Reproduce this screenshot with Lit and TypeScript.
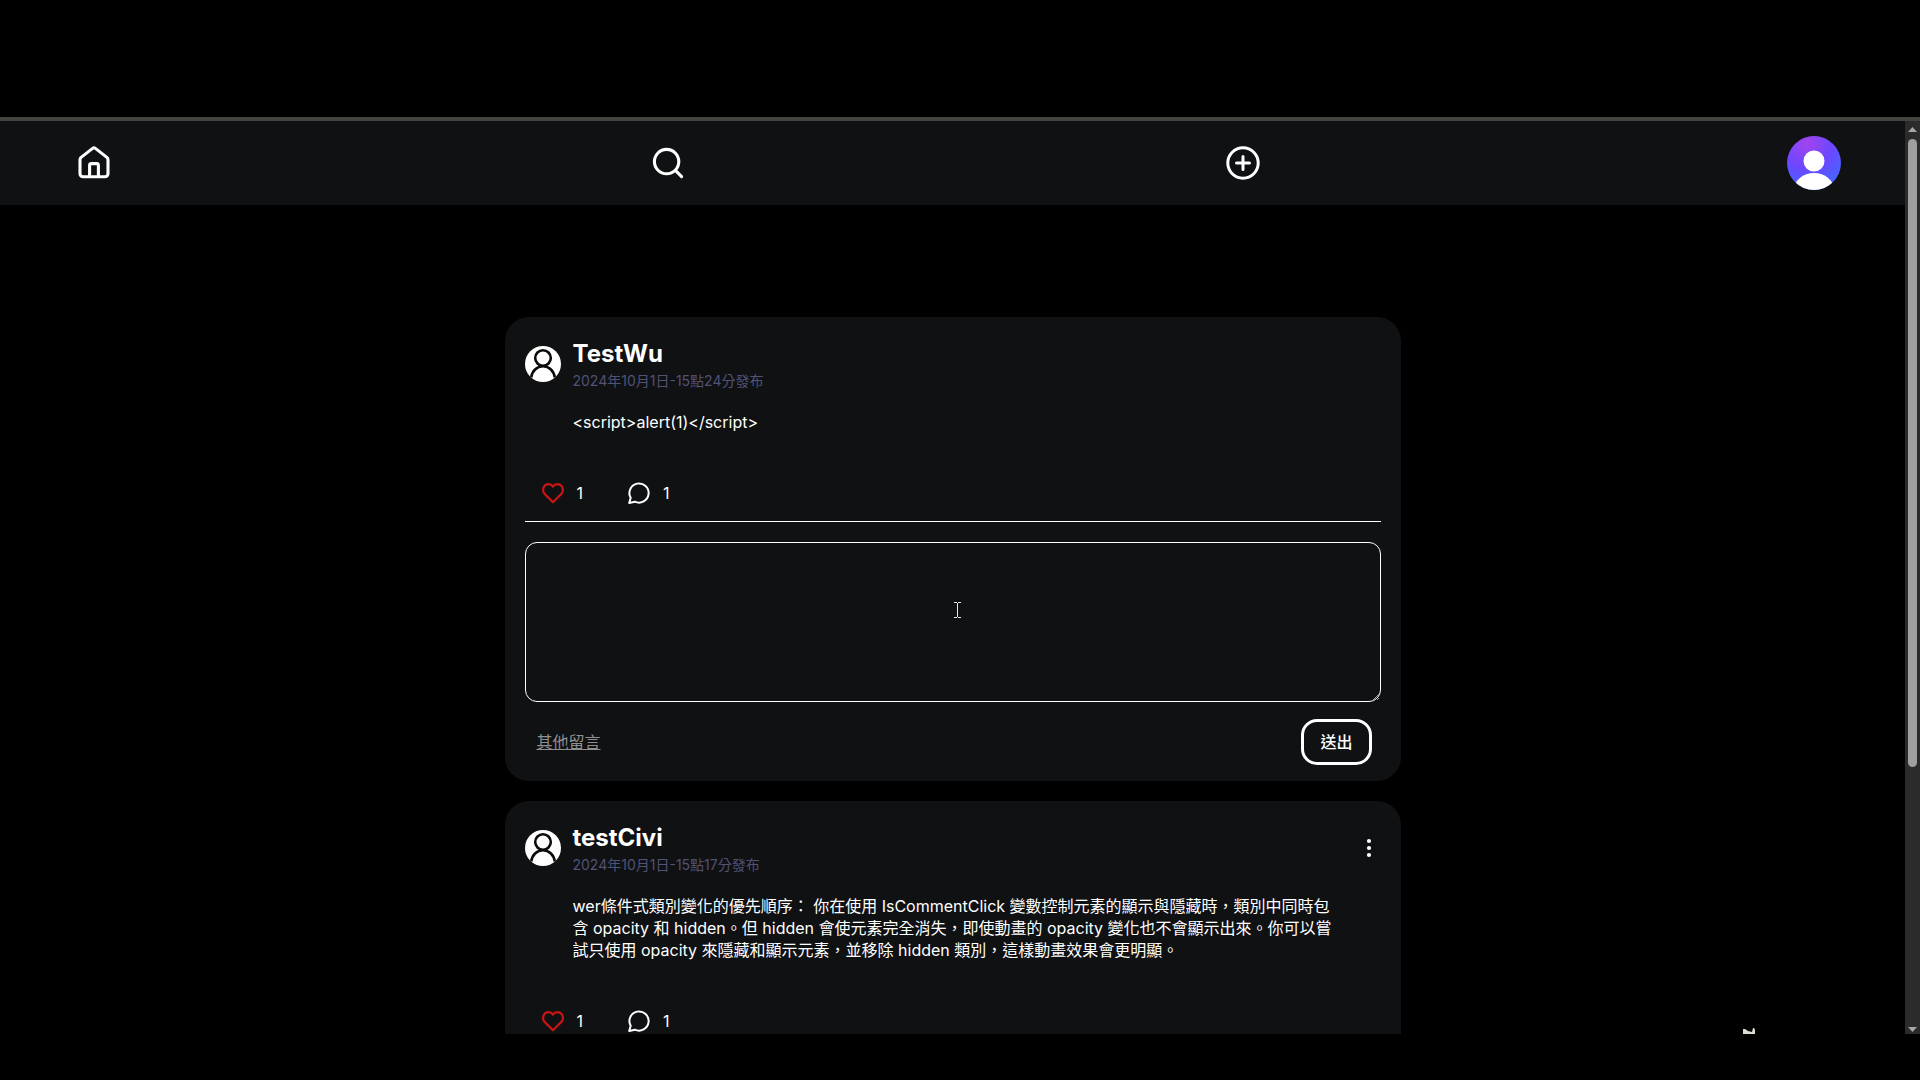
import { LitElement, html, css, svg, nothing } from "lit";
import { customElement, property } from "lit/decorators.js";

interface Post {
  id: number;
  author: string;
  date: string;
  body: string;
  likes: number;
  comments: number;
  replying: boolean;
  owned: boolean;
}

const POSTS: Post[] = [
  {
    id: 1,
    author: "TestWu",
    date: "2024年10月1日-15點24分發布",
    body: "<script>alert(1)</script>",
    likes: 1,
    comments: 1,
    replying: true,
    owned: false,
  },
  {
    id: 2,
    author: "testCivi",
    date: "2024年10月1日-15點17分發布",
    body:
      "wer條件式類別變化的優先順序： 你在使用 IsCommentClick 變數控制元素的顯示與隱藏時，類別中同時包含 opacity 和 hidden。但 hidden 會使元素完全消失，即使動畫的 opacity 變化也不會顯示出來。你可以嘗試只使用 opacity 來隱藏和顯示元素，並移除 hidden 類別，這樣動畫效果會更明顯。",
    likes: 1,
    comments: 1,
    replying: false,
    owned: true,
  },
];

const shared = css`
  * {
    box-sizing: border-box;
  }
  button,
  textarea {
    margin: 0;
    padding: 0;
    border: 0;
    background: none;
    color: inherit;
    font: inherit;
  }
  button {
    cursor: pointer;
  }
  svg {
    display: block;
    fill: none;
  }
`;

@customElement("site-nav")
export class SiteNav extends LitElement {
  static styles = [
    shared,
    css`
      :host {
        display: block;
        background: #0f1113;
      }
      .bar {
        display: flex;
        align-items: center;
        justify-content: space-between;
        height: 84px;
        padding: 0 64px;
      }
      .item {
        display: flex;
        align-items: center;
        justify-content: center;
        width: 60px;
        height: 60px;
        color: #fff;
      }
      .avatar {
        width: 54px;
        height: 54px;
        border-radius: 50%;
        overflow: hidden;
      }
    `,
  ];

  render() {
    return html`
      <nav class="bar">
        <a class="item" href="#home" aria-label="Home">
          <svg width="34" height="34" viewBox="0 0 34 34" stroke="currentColor" stroke-width="3.1" stroke-linejoin="round">
            <path d="M3 13.8c0-1 .4-1.800 1.100-2.400L15.600 2.400a2.200 2.200 0 0 1 2.800 0l11.500 9c.7.6 1.100 1.400 1.100 2.400v14a3 3 0 0 1-3 3H6a3 3 0 0 1-3-3z" />
            <path d="M12.600 30.800V19.400a1.800 1.800 0 0 1 1.800-1.800h5.200a1.800 1.800 0 0 1 1.800 1.800v11.400" />
          </svg>
        </a>
        <a class="item" href="#search" aria-label="Search">
          <svg width="34" height="34" viewBox="0 0 34 34" stroke="currentColor" stroke-width="3.1" stroke-linecap="round">
            <circle cx="15.6" cy="15.6" r="12.2" />
            <path d="m24.4 24.4 6.2 6.2" />
          </svg>
        </a>
        <a class="item" href="#create" aria-label="Create post">
          <svg width="34" height="34" viewBox="0 0 34 34" stroke="currentColor" stroke-width="3" stroke-linecap="round">
            <circle cx="17" cy="17" r="15.2" />
            <path d="M17 10.5v13M10.5 17h13" />
          </svg>
        </a>
        <button class="avatar" aria-label="Account">
          <svg width="54" height="54" viewBox="0 0 54 54">
            <defs>
              <radialGradient id="violet" cx="0.36" cy="0.12" r="0.95">
                <stop offset="0" stop-color="#a444ee" />
                <stop offset="0.5" stop-color="#6c47ff" />
                <stop offset="1" stop-color="#3f6bff" />
              </radialGradient>
            </defs>
            <rect width="54" height="54" fill="url(#violet)" />
            <circle cx="27" cy="25" r="10.5" fill="#fff" />
            <ellipse cx="27" cy="54" rx="20" ry="17" fill="#fff" />
          </svg>
        </button>
      </nav>
    `;
  }
}

@customElement("post-card")
export class PostCard extends LitElement {
  static styles = [
    shared,
    css`
      :host {
        display: block;
      }
      .card {
        padding: 20px 20px 16px;
        border-radius: 24px;
        background: #0f1113;
      }
      .head {
        display: flex;
        align-items: center;
        gap: 12px;
      }
      .who {
        flex: 1;
      }
      .name {
        margin: 0;
        font-size: 24px;
        line-height: 34px;
        font-weight: 700;
      }
      .date {
        display: block;
        font-size: 14px;
        line-height: 20px;
        font-weight: 400;
        color: #525275;
      }
      .more {
        display: flex;
        justify-content: center;
        width: 24px;
        height: 24px;
      }
      .body {
        margin: 20px 48px 0;
        line-height: 22px;
      }
      .actions {
        display: flex;
        gap: 44px;
        margin-top: 48px;
        padding: 0 16px 16px;
      }
      .action {
        display: flex;
        align-items: center;
        gap: 12px;
        height: 24px;
      }
      .like svg {
        color: #c91414;
      }
      .reply {
        border-top: 1px solid #fff;
        padding-top: 20px;
      }
      .text {
        display: block;
        width: 100%;
        height: 160px;
        padding: 12px;
        border: 1px solid #fff;
        border-radius: 12px;
        resize: vertical;
      }
      .foot {
        display: flex;
        align-items: center;
        justify-content: space-between;
        margin-top: 17px;
        padding: 0 9px 0 12px;
      }
      .others {
        color: #8f8f8f;
        text-decoration: underline;
      }
      .send {
        height: 46px;
        padding: 0 16px;
        border: 3px solid #fff;
        border-radius: 16px;
        font-weight: 500;
      }
    `,
  ];

  @property({ attribute: false }) post!: Post;

  private renderReply() {
    return html`
      <form class="reply" @submit=${(e: Event) => e.preventDefault()}>
        <textarea class="text" aria-label="留言"></textarea>
        <div class="foot">
          <a class="others" href="#comments">其他留言</a>
          <button class="send" type="submit">送出</button>
        </div>
      </form>
    `;
  }

  render() {
    const p = this.post;
    return html`
      <article class="card">
        <header class="head">
          <svg width="36" height="36" viewBox="0 0 36 36">
            <defs>
              <clipPath id="disc"><circle cx="18" cy="18" r="18" /></clipPath>
            </defs>
            <g clip-path="url(#disc)">
              <rect width="36" height="36" fill="#fff" />
              <circle cx="18" cy="12" r="7.8" stroke="#0a0b0c" stroke-width="2.6" />
              <path d="M6.2 31.5c.8-6.500 5.600-11.200 11.800-11.200s11 4.700 11.800 11.200" stroke="#0a0b0c" stroke-width="2.6" />
            </g>
          </svg>
          <div class="who">
            <h2 class="name">${p.author}</h2>
            <time class="date">${p.date}</time>
          </div>
          ${p.owned
            ? html`<button class="more" aria-label="更多">
                <svg width="24" height="24" viewBox="0 0 24 24">
                  ${[5, 12, 19].map((y) => svg`<circle cx="12" cy=${y} r="2.1" fill="#fff" />`)}
                </svg>
              </button>`
            : nothing}
        </header>
        <p class="body">${p.body}</p>
        <div class="actions">
          <button class="action like" aria-label="喜歡">
            <svg width="24" height="24" viewBox="0 0 24 24" stroke="currentColor" stroke-width="2.200" stroke-linejoin="round">
              <path d="M12 21.300 3.600 12.900a5.600 5.600 0 0 1-1.500-4.200C2.400 5.600 4.600 3.300 7.400 3.100 9.300 3 10.900 4 12 5.700 13.100 4 14.700 3 16.600 3.100c2.800.2 5 2.500 5.300 5.600a5.600 5.600 0 0 1-1.500 4.200z" />
            </svg>
            <span>${p.likes}</span>
          </button>
          <button class="action" aria-label="留言">
            <svg width="24" height="24" viewBox="0 0 24 24" stroke="currentColor" stroke-width="2" stroke-linejoin="round">
              <path d="M2.200 22 3.700 16.800a9.600 9.600 0 1 1 4.200 3.900z" />
            </svg>
            <span>${p.comments}</span>
          </button>
        </div>
        ${p.replying ? this.renderReply() : nothing}
      </article>
    `;
  }
}

@customElement("scroll-rail")
export class ScrollRail extends LitElement {
  static styles = css`
    :host {
      display: flex;
      flex-direction: column;
      align-items: center;
      justify-content: space-between;
      flex: none;
      width: 15px;
      padding: 6px 0 2px;
      background: #2b2b2b;
    }
    .track {
      flex: 1;
      width: 9px;
      margin: 7px 0 4px;
    }
    .thumb {
      height: 71%;
      border-radius: 5px;
      background: #9f9f9f;
    }
    svg {
      display: block;
      fill: #a6a6a6;
    }
  `;

  render() {
    return html`
      <svg width="9" height="5" viewBox="0 0 9 5"><path d="M4.500 0 9 5H0z" /></svg>
      <div class="track"><div class="thumb"></div></div>
      <svg width="9" height="5" viewBox="0 0 9 5"><path d="M0 0h9L4.500 5z" /></svg>
    `;
  }
}

@customElement("app-root")
export class AppRoot extends LitElement {
  static styles = css`
    :host {
      display: block;
      background: #000;
      color: #fff;
      font-family: Inter, "Noto Sans CJK TC", sans-serif;
      font-size: 16px;
      line-height: 24px;
    }
    .screen {
      display: flex;
      flex-direction: column;
      box-sizing: border-box;
      height: 100vh;
      padding: 117px 0 46px;
    }
    .window {
      position: relative;
      display: flex;
      flex: 1;
      min-height: 0;
      border-top: 4px solid #434340;
    }
    .page {
      flex: 1;
      min-width: 0;
      overflow: hidden;
    }
    .feed {
      display: flex;
      flex-direction: column;
      gap: 20px;
      max-width: 896px;
      margin: 0 auto;
      padding: 112px 0 64px;
    }
    .pointer {
      position: absolute;
      left: 954px;
      top: 481px;
      pointer-events: none;
    }
    .peek {
      position: absolute;
      right: 165px;
      bottom: 0;
    }
  `;

  render() {
    return html`
      <div class="screen" lang="zh-Hant">
        <div class="window">
          <div class="page">
            <site-nav></site-nav>
            <main class="feed">${POSTS.map((p) => html`<post-card .post=${p}></post-card>`)}</main>
          </div>
          <scroll-rail></scroll-rail>
          <svg class="pointer" width="7" height="16" viewBox="0 0 7 16" fill="#e8e8e8" aria-hidden="true">
            <path d="M0 0h3v1h1V0h3v1H4v14h3v1H4v-1H3v1H0v-1h3V1H0z" />
          </svg>
          <svg class="peek" width="12" height="6" viewBox="0 0 12 6" fill="#dcdcd4" aria-hidden="true">
            <path d="M0 1h2l3 2 4 1 1-4h1l1 2v4H0z" />
          </svg>
        </div>
      </div>
    `;
  }
}
